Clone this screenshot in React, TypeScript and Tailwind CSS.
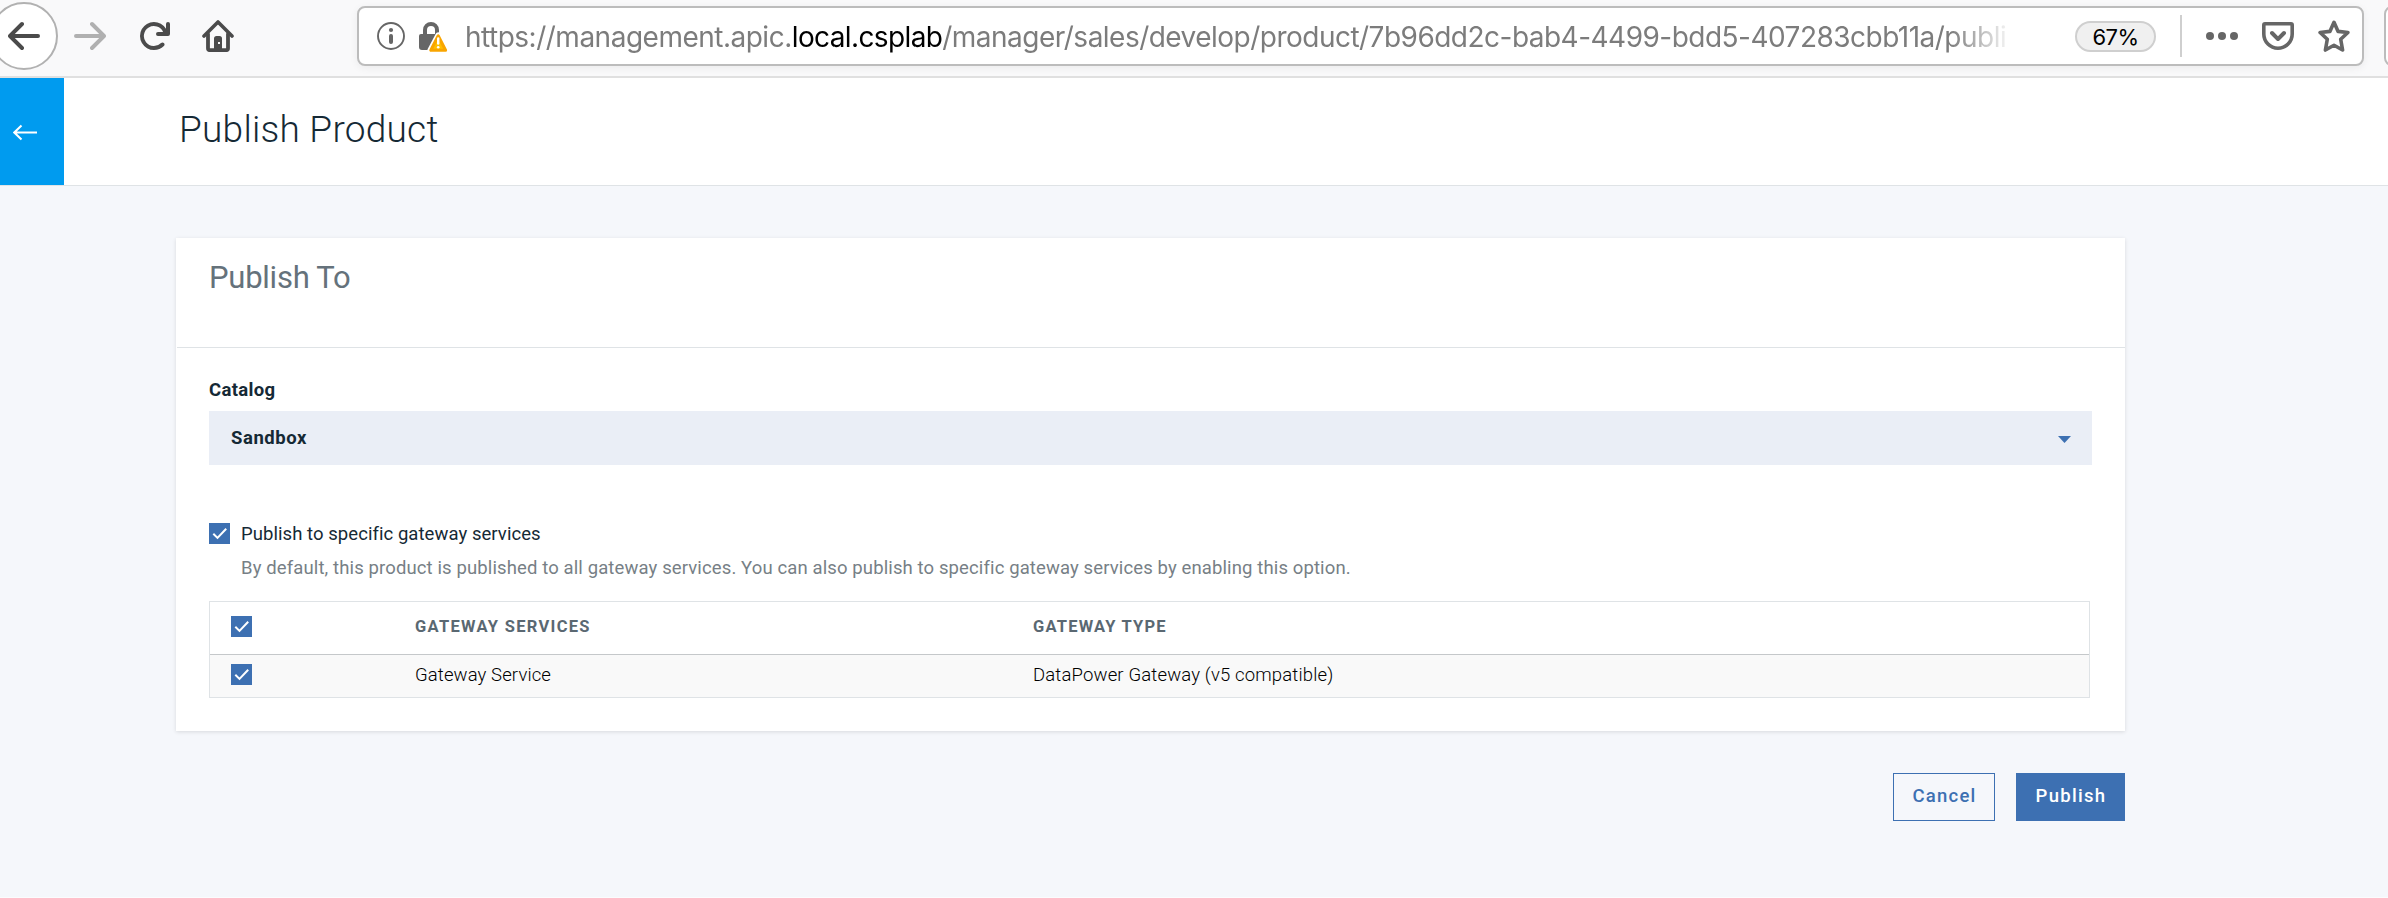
function BrowserBar() {
  return (
    <div className="flex h-[78px] items-start overflow-hidden border-b-2 border-[#e0e0e0] bg-[#f9f9fa]">
      <div className="-ml-[10px] mt-[2px] flex h-[68px] w-[68px] shrink-0 items-center justify-center rounded-full border-2 border-[#b1b1b1] bg-white">
        <svg className="h-8 w-8" viewBox="0 0 16 16" fill="#4b4b4b">
          <path d="M15 7H3.414l4.293-4.293a1 1 0 0 0-1.414-1.414l-6 6a1 1 0 0 0 0 1.414l6 6a1 1 0 0 0 1.414-1.414L3.414 9H15a1 1 0 0 0 0-2z" />
        </svg>
      </div>
      <svg className="ml-4 mt-5 h-8 w-8 shrink-0" viewBox="0 0 16 16" fill="#b0b0b0">
        <path transform="matrix(-1 0 0 1 16 0)" d="M15 7H3.414l4.293-4.293a1 1 0 0 0-1.414-1.414l-6 6a1 1 0 0 0 0 1.414l6 6a1 1 0 0 0 1.414-1.414L3.414 9H15a1 1 0 0 0 0-2z" />
      </svg>
      <svg className="ml-8 mt-5 h-8 w-8 shrink-0" viewBox="0 0 16 16" fill="#4b4b4b">
        <path d="M15 1a1 1 0 0 0-1 1v2.418A6.995 6.995 0 1 0 8 15a6.954 6.954 0 0 0 4.95-2.05 1 1 0 0 0-1.414-1.414A5.019 5.019 0 1 1 12.549 6H10a1 1 0 0 0 0 2h5a1 1 0 0 0 1-1V2a1 1 0 0 0-1-1z" />
      </svg>
      <svg className="ml-8 mt-5 h-8 w-8 shrink-0" viewBox="0 0 32 32" fill="none" stroke="#4b4b4b" strokeLinecap="round" strokeLinejoin="round">
        <path d="M2 16L16 2l14 14" strokeWidth="3.6" />
        <path d="M6 14v14.2a2 2 0 0 0 2 2h16a2 2 0 0 0 2-2V14" strokeWidth="3.8" />
        <path d="M12 30V18.500a2.500 2.500 0 0 1 2.500-2.500h3a2.500 2.500 0 0 1 2.500 2.500V30z" fill="#4b4b4b" stroke="none" />
        <rect x="16" y="22" width="2" height="2" fill="#f9f9fa" stroke="none" />
      </svg>

      <div className="ml-[123px] mt-[6px] flex h-[60px] w-[2007px] shrink-0 items-center rounded-lg border-2 border-[#bcbcbc] bg-white pl-[18px] shadow-[0_2px_8px_rgba(0,0,0,0.06)]">
        <svg className="h-7 w-7 shrink-0" viewBox="0 0 28 28" fill="none">
          <circle cx="14" cy="14" r="13" stroke="#666" strokeWidth="1.9" />
          <circle cx="14" cy="8" r="2.100" fill="#666" />
          <rect x="12" y="12" width="4" height="10" rx="1.900" fill="#666" />
        </svg>
        <svg className="ml-[14px] h-8 w-8 shrink-0" viewBox="0 0 32 32">
          <path d="M6 15V10a6 6 0 0 1 12 0V15" fill="none" stroke="#666" strokeWidth="4" />
          <path d="M2 14h16l-7 16H3a3 3 0 0 1-3-3V16a2 2 0 0 1 2-2z" fill="#666" />
          <path d="M19 15L11 30h17z" fill="#fff" stroke="#fff" strokeWidth="5" strokeLinejoin="round" />
          <path d="M19.200 15.800L11.800 30.300h14.800z" fill="#ffbf00" stroke="#f9a500" strokeWidth="3" strokeLinejoin="round" />
          <path d="M19.200 18.500v5" stroke="#fff" strokeWidth="2.400" strokeLinecap="round" />
          <circle cx="19.200" cy="27.200" r="1.300" fill="#fff" />
        </svg>
        <div className="ml-[14px] w-[1545px] shrink-0 overflow-hidden whitespace-nowrap pt-[2px] font-['Inter',sans-serif] text-[28px] leading-[54px] tracking-[-0.5px] text-[#7c7c7c] [mask-image:linear-gradient(to_right,#000_1485px,transparent_1548px)]">
          https://management.apic.<span className="tracking-[-0.62px] text-black">local.csplab</span>
          <span className="tracking-[-0.52px]">/manager/sales/develop/product/7b96dd2c-bab4-4499-bdd5-407283cbb11a/publi</span>
        </div>
        <div className="ml-[65px] mt-[1px] flex h-[31px] w-[81px] shrink-0 items-center justify-center rounded-full border-2 border-[#cfcfcf] bg-[#f0f0f0] pt-px font-['Inter',sans-serif] text-[22px] tracking-[-0.5px] text-black">
          67%
        </div>
        <div className="ml-6 h-[42px] w-[2px] shrink-0 bg-[#cfcfcf]" />
        <svg className="ml-6 h-8 w-8 shrink-0" viewBox="0 0 32 32" fill="#666">
          <circle cx="4" cy="16" r="4" />
          <circle cx="16" cy="16" r="4" />
          <circle cx="28" cy="16" r="4" />
        </svg>
        <svg className="ml-6 h-8 w-8 shrink-0" viewBox="0 0 16 16" fill="#666">
          <path d="M8 15a8 8 0 0 1-8-8V2.500A1.500 1.500 0 0 1 1.500 1h13A1.500 1.500 0 0 1 16 2.500V7a8 8 0 0 1-8 8zm6.200-12.300H1.800V7a6.200 6.200 0 0 0 12.400 0zM8.707 10.207a1 1 0 0 1-1.414 0l-3-3a1 1 0 0 1 1.414-1.414L8 8.086l2.293-2.293a1 1 0 0 1 1.414 1.414z" />
        </svg>
        <svg className="ml-6 h-8 w-8 shrink-0" viewBox="0 0 32 32" fill="none" stroke="#666" strokeWidth="3.600" strokeLinejoin="round">
          <path d="M16 2.300l4.100 9.100 9.800 1.100-7.200 6.800 1.900 10.700L16 25.200 7.400 30l1.900-10.700-7.200-6.800 9.800-1.100z" />
        </svg>
      </div>
      <div className="ml-5 mt-[6px] h-[60px] w-[60px] shrink-0 rounded-lg border-2 border-[#bcbcbc] bg-white" />
    </div>
  );
}

function Check() {
  return (
    <div className="flex h-[21px] w-[21px] shrink-0 items-center justify-center bg-[#3d70b2]">
      <svg className="h-[21px] w-[21px]" viewBox="0 0 21 21" fill="none" stroke="#fff" strokeWidth="2">
        <path d="M4.300 10.700l4.200 4.200 8.700-9.200" />
      </svg>
    </div>
  );
}

export default function App() {
  return (
    <div className="flex h-[898px] w-[2388px] flex-col overflow-hidden border-b border-[#fbfcfd] bg-[#f5f7fb] font-['Roboto',sans-serif] text-[18.5px] text-[#152935]">
      <BrowserBar />

      <header className="flex h-[108px] shrink-0 border-b border-[#dfe3e6] bg-white">
        <button className="flex h-[107px] w-16 items-center bg-[#009bef] pl-[13px]">
          <svg className="h-[18px] w-[26px]" viewBox="0 0 26 18" fill="none" stroke="#fff" strokeWidth="2">
            <path d="M24 9.500H1.500M8.500 2.500L1.300 9.500l7.200 7" />
          </svg>
        </button>
        <h1 className="ml-[115px] text-[37px] font-light leading-[103px] tracking-[0.25px]">Publish Product</h1>
      </header>

      <main className="ml-[176px] mt-[52px] w-[1949px]">
        <section className="h-[493px] bg-white shadow-[0_1px_4px_rgba(0,0,0,0.12)]">
          <div className="ml-px h-[110px] border-b border-[#dfe3e6] pl-8 pt-[20px]">
            <h2 className="text-[31px] leading-[40px] tracking-[-0.25px] text-[#65727b]">Publish To</h2>
          </div>
          <div className="px-[33px] pt-[29px]">
            <div className="h-[34px] font-bold leading-[26px] tracking-[0.35px]">Catalog</div>
            <div className="flex h-[54px] items-center justify-between bg-[#eaeef6] pl-[22px] pr-[21px]">
              <span className="pt-[2px] font-bold tracking-[0.55px]">Sandbox</span>
              <svg className="mt-[3px] h-[7px] w-[13px]" viewBox="0 0 13 7">
                <path d="M0 0h13L6.500 7z" fill="#3d70b2" />
              </svg>
            </div>

            <div className="mt-[58px] flex h-[22px] items-start">
              <Check />
              <span className="ml-[11px] leading-[22px] tracking-[0.06px]">Publish to specific gateway services</span>
            </div>
            <p className="ml-8 mt-[10px] leading-[26px] tracking-[0.12px] text-[#777f86]">
              By default, this product is published to all gateway services. You can also publish to specific gateway services by enabling this option.
            </p>

            <div className="mt-5 h-[97px] w-[1881px] border border-[#dfe3e6]">
              <div className="flex h-[53px] items-center border-b border-[#c5c8ca] pb-[4px] pl-[21px] text-[16.5px] font-bold text-[#5a6872]">
                <Check />
                <span className="ml-[163px] w-[618px] pt-[3px] tracking-[1.3px]">GATEWAY SERVICES</span>
                <span className="pt-[3px] tracking-[1.2px]">GATEWAY TYPE</span>
              </div>
              <div className="flex h-[42px] items-center bg-[#f9f9f9] pb-[3px] pl-[21px] font-light text-black">
                <Check />
                <span className="ml-[163px] w-[618px] pt-[2px] tracking-[0.12px]">Gateway Service</span>
                <span className="pt-[2px] tracking-[0.16px]">DataPower Gateway (v5 compatible)</span>
              </div>
            </div>
          </div>
        </section>

        <div className="mt-[42px] flex justify-end gap-[21px] font-medium">
          <button className="h-12 w-[102px] border border-[#3d70b2] pl-px tracking-[1.2px] text-[#3d70b2]">Cancel</button>
          <button className="h-12 w-[109px] bg-[#3d70b2] pl-px tracking-[1.3px] text-white">Publish</button>
        </div>
      </main>
    </div>
  );
}
